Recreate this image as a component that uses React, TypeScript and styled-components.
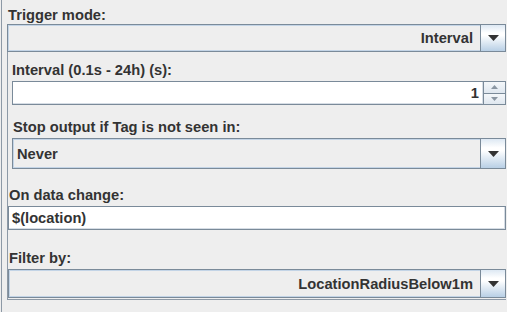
import React from "react";
import styled, { createGlobalStyle } from "styled-components";

const GlobalStyle = createGlobalStyle`
  html, body {
    margin: 0;
    padding: 0;
    background: #eeeeee;
  }
  body {
    font-family: "Liberation Sans", Arial, sans-serif;
  }
`;

const Frame = styled.div`
  box-sizing: border-box;
  height: 312px;
  width: 506px;
  margin-left: 1px;
  border-left: 1px solid #8d99a6;
  padding: 7px 0 0 5px;
`;

const Column = styled.div`
  width: 499px;
  display: flex;
  flex-direction: column;
`;

const Label = styled.div<{ $top?: number; $indent?: number }>`
  margin-top: ${(p) => p.$top ?? 0}px;
  padding-left: ${(p) => p.$indent ?? 0}px;
  font-size: 14.7px;
  line-height: 17px;
  font-weight: bold;
  color: #333333;
  white-space: nowrap;
`;

const Combo = styled.div<{ $h: number; $top?: number }>`
  box-sizing: border-box;
  margin-top: ${(p) => p.$top ?? 0}px;
  height: ${(p) => p.$h}px;
  display: flex;
  border: 1px solid #7a8a99;
  background: #eeeeee;
`;

const ComboValue = styled.div<{ $align: "left" | "right" }>`
  flex: 1;
  display: flex;
  align-items: center;
  justify-content: ${(p) => (p.$align === "left" ? "flex-start" : "flex-end")};
  padding: 0 7px 0 3px;
  border: 1px solid #c3d4e6;
  border-right: none;
  font-size: 14.7px;
  font-weight: bold;
  color: #333333;
  white-space: nowrap;
`;

const ArrowButton = styled.div`
  width: 24px;
  display: flex;
  align-items: center;
  justify-content: center;
  border-left: 1px solid #7a8a99;
  background: linear-gradient(#dde8f3 0%, #ffffff 30%, #ffffff 40%, #b8cfe5 100%);
`;

const Panel = styled.div`
  display: flex;
  flex-direction: column;
  border-left: 1px solid #8d99a6;
  border-bottom: 1px solid #8d99a6;
  padding-bottom: 1px;
`;

const Section = styled.div`
  display: flex;
  flex-direction: column;
  padding-left: 4px;
`;

const TextField = styled.div<{ $align: "left" | "right"; $top?: number; $grow?: boolean }>`
  box-sizing: border-box;
  margin-top: ${(p) => p.$top ?? 0}px;
  height: 24px;
  flex: ${(p) => (p.$grow ? "1 1 auto" : "none")};
  display: flex;
  align-items: center;
  justify-content: ${(p) => (p.$align === "left" ? "flex-start" : "flex-end")};
  padding: 0 4px 0 3px;
  background: #ffffff;
  border: 1px solid #7a8a99;
  box-shadow: inset -1px -1px 0 #d6dde5;
  font-size: 14.7px;
  font-weight: bold;
  color: #333333;
  white-space: nowrap;
`;

const Spinner = styled.div`
  margin-top: 2px;
  height: 24px;
  display: flex;
`;

const SpinButtons = styled.div`
  width: 22px;
  display: flex;
  flex-direction: column;
`;

const SpinButton = styled.div`
  flex: 1;
  display: flex;
  align-items: center;
  justify-content: center;
  box-sizing: border-box;
  border: 1px solid #7a8a99;
  border-left: none;
  background: linear-gradient(#f4f7fa, #dfe7ef);
  & + & {
    border-top: none;
  }
`;

const Arrow = () => (
  <svg width="11" height="6" viewBox="0 0 11 6">
    <polygon points="0,0 11,0 5.5,6" fill="#333333" />
  </svg>
);

const SmallArrow = ({ up }: { up?: boolean }) => (
  <svg width="7" height="4" viewBox="0 0 7 4">
    <polygon points={up ? "0,4 7,4 3.5,0" : "0,0 7,0 3.5,4"} fill="#8a96a2" />
  </svg>
);

export default function App() {
  return (
    <>
      <GlobalStyle />
      <Frame>
        <Column>
          <Label $indent={1}>Trigger mode:</Label>
          <Combo $h={28}>
            <ComboValue $align="right">Interval</ComboValue>
            <ArrowButton>
              <Arrow />
            </ArrowButton>
          </Combo>
          <Panel>
            <Section>
              <Label $top={10}>Interval (0.1s - 24h) (s):</Label>
              <Spinner>
                <TextField $align="right" $grow>
                  1
                </TextField>
                <SpinButtons>
                  <SpinButton>
                    <SmallArrow up />
                  </SpinButton>
                  <SpinButton>
                    <SmallArrow />
                  </SpinButton>
                </SpinButtons>
              </Spinner>
              <Label $top={14} $indent={1}>
                Stop output if Tag is not seen in:
              </Label>
              <Combo $h={31} $top={2}>
                <ComboValue $align="left">Never</ComboValue>
                <ArrowButton>
                  <Arrow />
                </ArrowButton>
              </Combo>
            </Section>
            <Label $top={18} $indent={1}>
              On data change:
            </Label>
            <TextField $align="left" $top={2}>
              $(location)
            </TextField>
            <Label $top={20} $indent={1}>
              Filter by:
            </Label>
            <Combo $h={29} $top={2}>
              <ComboValue $align="right">LocationRadiusBelow1m</ComboValue>
              <ArrowButton>
                <Arrow />
              </ArrowButton>
            </Combo>
          </Panel>
        </Column>
      </Frame>
    </>
  );
}
